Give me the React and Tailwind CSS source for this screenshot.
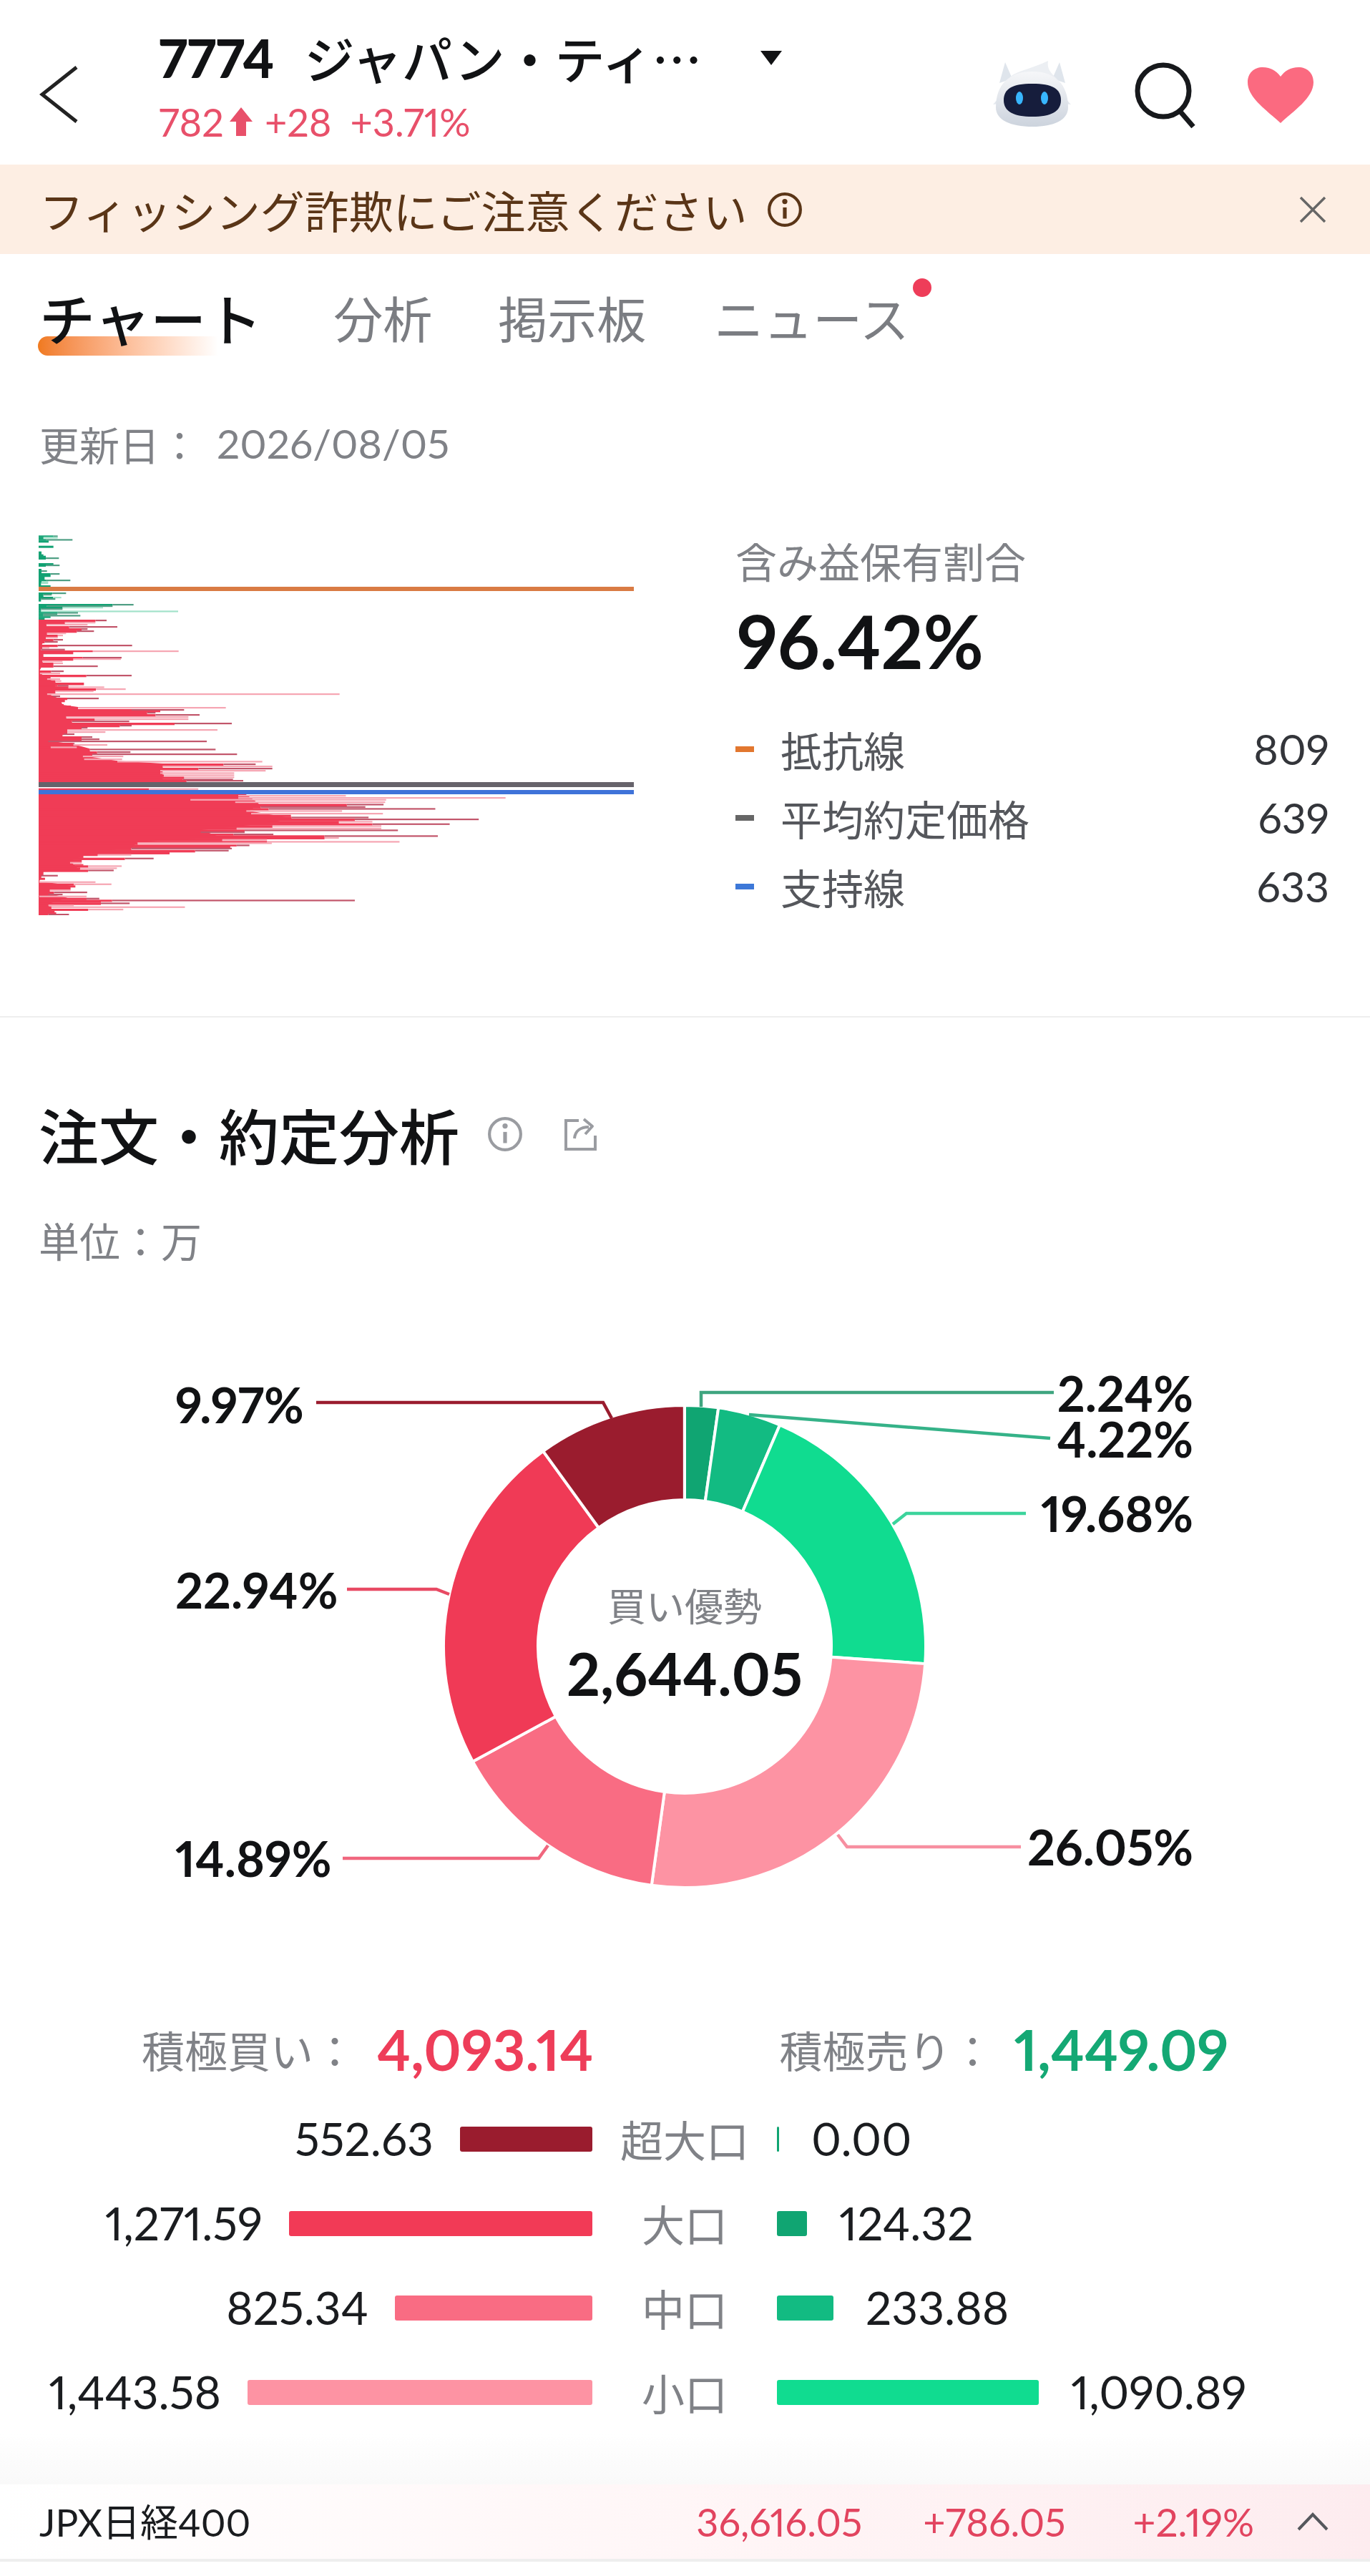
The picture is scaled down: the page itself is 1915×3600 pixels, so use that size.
import React from 'react';

// depth chart rows, read off the crops: [crop y, solid end, tail end, tail type]
const greenTop = [
  [25,72,90,'d'],[31,30,90,'l'],[40,40,152,'d'],[46,52,52,'d'],[68,72,72,'d'],[92,22,22,'d'],[104,30,30,'d'],[110,40,40,'d'],[117,40,95,'d'],
  [141,72,72,'d'],[147,40,98,'d'],[165,22,22,'d'],[171,22,45,'d'],[183,60,98,'d'],[189,60,60,'d'],[198,35,35,'l'],[210,40,143,'d'],[216,22,50,'l'],[222,20,50,'l'],[234,60,60,'d'],
  [264,68,125,'d'],[270,30,65,'d'],[282,70,105,'l'],[288,20,80,'d'],[293,20,20,'d'],
  [312,320,408,'d'],[318,45,320,'d'],[324,110,280,'l'],[330,20,110,'d'],[340,20,595,'l'],[346,90,175,'d'],[352,30,88,'d'],[358,30,185,'d'],[364,60,60,'d'],[370,35,35,'d'],
];
const redTop = [
  [378,248,295,'d'],[387,120,248,'l'],[396,42,215,'l'],[405,138,340,'d'],[414,190,215,'d'],[423,170,242,'d'],[432,45,125,'l'],[441,90,112,'l'],[450,40,90,'l'],[459,72,112,'d'],[468,35,90,'d'],
  [483,90,402,'d'],[492,25,55,'l'],[500,20,120,'d'],[507,237,597,'l'],[513,155,155,'d'],[522,30,30,'d'],[534,195,358,'d'],
];
const redMid = [
  [0,155,355,'l'],[9,25,110,'l'],[18,72,112,'l'],[30,72,258,'d'],[51,62,115,'d'],[60,15,100,'l'],[69,210,400,'d'],[78,60,60,'d'],[84,45,100,'l'],[92,80,105,'l'],[102,200,200,'d'],[112,90,135,'d'],[118,135,285,'l'],[126,250,375,'l'],[135,80,240,'l'],
  [147,45,1272,'l'],[156,70,100,'d'],[165,130,262,'d'],[174,120,120,'d'],[183,100,100,'d'],[192,115,115,'d'],[198,145,145,'d'],[204,175,795,'l'],[213,400,620,'d'],[219,520,520,'d'],[225,465,500,'d'],[234,500,685,'d'],
  [243,125,638,'l'],[252,245,638,'l'],[261,150,390,'d'],[270,580,820,'d'],[279,350,400,'d'],[288,190,215,'d'],[297,130,760,'l'],[306,130,290,'l'],[315,115,160,'d'],[321,110,110,'d'],[327,190,235,'d'],[336,190,265,'d'],
  [345,50,715,'d'],[354,155,160,'d'],[360,155,298,'l'],[370,60,170,'l'],[379,225,752,'d'],[390,255,395,'d'],[399,235,842,'d'],[408,195,365,'l'],[420,200,360,'l'],[430,340,948,'l'],[441,785,920,'d'],[450,530,990,'l'],
  [459,680,990,'d'],[468,520,962,'l'],[478,520,830,'l'],[487,535,830,'l'],[496,620,830,'l'],[505,615,825,'d'],[510,630,868,'d'],[516,630,630,'d'],
];
const redLow = [
  [5,355,510,'l'],[33,635,972,'l'],[42,635,1472,'l'],[50,485,1098,'l'],[60,625,1095,'l'],[70,975,1090,'d'],[80,705,1033,'d'],[88,730,1252,'d'],[97,660,960,'l'],[108,675,1088,'l'],[116,800,800,'d'],[124,802,1043,'d'],
  [132,1000,1388,'d'],[142,950,1055,'l'],[152,1055,1297,'d'],[160,742,1083,'l'],[170,630,1083,'l'],[178,655,1135,'d'],[186,517,655,'d'],[195,620,745,'d'],[202,905,1260,'d'],[210,905,950,'l'],[218,585,725,'l'],[226,725,1140,'l'],
  [232,320,740,'l'],[241,630,670,'d'],[248,610,610,'d'],[254,300,615,'d'],[263,500,605,'d'],[273,420,420,'d'],[281,195,300,'l'],[288,150,150,'d'],[296,280,370,'d'],[305,145,145,'d'],[314,108,145,'l'],[323,150,150,'d'],[328,165,270,'l'],[337,140,255,'l'],[346,165,245,'d'],
  [355,25,25,'d'],[368,18,70,'d'],[380,30,30,'l'],[395,12,188,'l'],[404,120,238,'l'],[412,125,125,'d'],[420,110,110,'d'],[429,45,110,'l'],[438,58,162,'d'],[447,40,85,'d'],[455,10,160,'l'],[464,160,200,'d'],[472,240,1000,'d'],[480,205,205,'d'],[484,205,295,'d'],[493,40,120,'l'],[500,50,468,'l'],[510,165,275,'l'],[518,60,60,'d'],[525,65,65,'d'],[531,40,105,'d'],[537,25,25,'d'],
];

// solid red mass underneath the rows, as [crop y, crop x] outlines
const topMass = [[378,120],[396,42],[420,45],[470,30],[500,15],[540,30]];
const midMass = [[0,30],[30,25],[50,15],[60,15],[84,45],[100,80],[135,80],[147,45],[170,100],[195,110],[204,175],[243,125],[300,130],[315,115],[345,50],[360,155],[379,225],[408,195],[430,340],[441,530],[516,530]];
const lowMass = [[12,640],[70,700],[100,670],[130,800],[150,740],[180,520],[210,580],[230,320],[255,300],[270,190],[290,145],[310,108],[350,140],[355,25],[395,12],[412,110],[425,40],[445,40],[464,100],[490,40],[525,50],[537,15]];

const massPoints = (outline, topY, scale) => {
  const pts = outline.map(([zy, zx]) => `${54 + (zx - 10) / scale},${topY + zy / 3}`);
  return `54,${topY + outline[0][0] / 3} ${pts.join(' ')} 54,${topY + outline[outline.length - 1][0] / 3}`;
};

const green = { solid: '#12a273', d: '#4f9f84', l: '#a2e2ca' };
const red = { solid: '#f03c56', d: '#c2566b', l: '#f6a6b3' };

const toRows = (rows, topY, scale, pal) =>
  rows.map(([zy, s, e, t]) => ({ y: topY + zy / 3, s: (s - 10) / scale, e: (e - 10) / scale, tail: pal[t], solid: pal.solid }));

const depthRows = [
  ...toRows(greenTop, 740, 3, green),
  ...toRows(redTop, 740, 3, red),
  ...toRows(redMid, 920, 3, red),
  ...toRows(redLow, 1100, 2.24, red),
];

const DepthChart = () => (
  <svg className="w-[832px] h-[532px] shrink-0 block" viewBox="54 747 832 532">
    <polygon points={massPoints(topMass, 740, 3)} fill="#f03c56" />
    <polygon points={massPoints(midMass, 920, 3)} fill="#f03c56" />
    <polygon points={massPoints(lowMass, 1100, 2.24)} fill="#f03c56" />
    {depthRows.map((r, i) => {
      const next = depthRows[i + 1];
      const gap = next ? next.y - r.y : 3;
      const h = gap > 0 && gap < 4.5 ? gap + 0.3 : 3;
      return (
        <g key={i}>
          {r.e > r.s && <rect x={54 + r.s} y={r.y} width={r.e - r.s} height={2.2} fill={r.tail} />}
          <rect x={54} y={r.y} width={Math.max(r.s, 1)} height={h} fill={r.solid} />
        </g>
      );
    })}
    <rect x="54" y="820" width="832" height="6" fill="#d97b44" />
    <rect x="54" y="1093" width="832" height="7" fill="#66636b" />
    <rect x="54" y="1104" width="832" height="6" fill="#3f73d9" />
  </svg>
);

// donut segments clockwise from twelve o'clock
const segments = [
  [2.24, '#10a572'],
  [4.22, '#12bb82'],
  [19.68, '#10dc90'],
  [26.05, '#fd93a3'],
  [14.89, '#f96c83'],
  [22.94, '#f03a56'],
  [9.97, '#9a1c2e'],
];

const wedge = (from, to) => {
  const cx = 957, cy = 2301, R = 337, r = 205;
  const pt = (rad, pct) => {
    const a = (pct / 100) * Math.PI * 2 - Math.PI / 2;
    return `${(cx + rad * Math.cos(a)).toFixed(2)} ${(cy + rad * Math.sin(a)).toFixed(2)}`;
  };
  const large = to - from > 50 ? 1 : 0;
  return `M${pt(R, from)} A${R} ${R} 0 ${large} 1 ${pt(R, to)} L${pt(r, to)} A${r} ${r} 0 ${large} 0 ${pt(r, from)} Z`;
};

const DonutDrawing = () => {
  let acc = 0;
  return (
    <svg className="absolute left-0 top-0 w-[1915px] h-[1058px]" viewBox="0 1762 1915 1058" fill="none">
      {segments.map(([pct, color]) => {
        const from = acc;
        acc += pct;
        return <path key={color} d={wedge(from, acc)} fill={color} stroke="#ffffff" strokeWidth="4" />;
      })}
      <g strokeWidth="4.5">
        <path d="M980 1966V1946H1473" stroke="#3fa57f" />
        <path d="M1047 1977L1468 2010" stroke="#35b288" />
        <path d="M1248 2130L1267 2115H1434" stroke="#3cd49c" />
        <path d="M1171 2564L1184 2581H1427" stroke="#f78fa0" />
        <path d="M766 2579L753 2597H479" stroke="#f0677e" />
        <path d="M628 2228L610 2221H485" stroke="#e84a63" />
        <path d="M855 1982L843 1960H442" stroke="#9a1c2e" />
      </g>
    </svg>
  );
};

const RobotIcon = () => (
  <svg className="w-[110px] h-[100px]" viewBox="1389 82 110 100">
    <defs>
      <linearGradient id="robotHead" x1="0" y1="0" x2="0" y2="1">
        <stop offset="0" stopColor="#f6f7f9" />
        <stop offset="1" stopColor="#ccd3dd" />
      </linearGradient>
    </defs>
    <path d="M1398 116L1406 87L1416 110Z M1490 116L1482 87L1472 110Z" fill="#dfe5ec" />
    <path d="M1412 108C1424 98 1444 96 1466 85C1464 96 1470 102 1478 110Z" fill="#eceff3" />
    <path d="M1389 146C1394 141 1397 137 1399 128L1405 144Z M1498 146C1493 141 1490 137 1488 128L1482 144Z" fill="#e3e8ee" />
    <path d="M1393 150C1393 118 1412 100 1444 100C1476 100 1494 118 1494 150C1494 168 1474 177 1444 177C1414 177 1393 168 1393 150Z" fill="url(#robotHead)" />
    <path d="M1404 140C1404 124 1416 117 1444 117C1472 117 1484 124 1484 140C1484 156 1470 163 1444 163C1418 163 1404 156 1404 140Z" fill="#161d3c" />
    <ellipse cx="1426" cy="137" rx="5" ry="9" fill="#38b6ff" />
    <ellipse cx="1461" cy="137" rx="5" ry="9" fill="#38b6ff" />
  </svg>
);

const SearchIcon = () => (
  <svg className="w-[90px] h-[100px]" viewBox="1582 82 90 100" fill="none" stroke="#17191c" strokeWidth="7">
    <circle cx="1626" cy="127" r="36" />
    <path d="M1649 155L1668 177" />
  </svg>
);

const HeartIcon = () => (
  <svg className="w-[92px] h-[100px]" viewBox="1744 82 92 100">
    <path d="M1790 172C1772 155 1744 137 1744 115C1744 102 1753 94 1765 94C1776 94 1784 99 1790 107C1796 99 1804 94 1815 94C1827 94 1836 102 1836 115C1836 137 1808 155 1790 172Z" fill="#fb6a80" />
  </svg>
);

const InfoIcon = ({ className, color }) => (
  <svg className={className} viewBox="0 0 48 48" fill="none" stroke={color} strokeWidth="4">
    <circle cx="24" cy="24" r="21" />
    <path d="M24 21V36" strokeWidth="5" />
    <circle cx="24" cy="13" r="1.5" fill={color} />
  </svg>
);

const pctLabels = [
  { text: '2.24%', cls: 'right-[247px] top-[153px]' },
  { text: '4.22%', cls: 'right-[247px] top-[217px]' },
  { text: '19.68%', cls: 'right-[247px] top-[321px]' },
  { text: '26.05%', cls: 'right-[247px] top-[787px]' },
  { text: '9.97%', cls: 'left-[245px] top-[169px]' },
  { text: '22.94%', cls: 'left-[245px] top-[428px]' },
  { text: '14.89%', cls: 'left-[245px] top-[803px]' },
];

const sizeRows = [
  { label: '超大口', left: '552.63', right: '0.00', lw: 'w-[185px]', lc: 'bg-[#9a1c2e]', rw: 'w-[3px]', rc: 'bg-[#10a572]' },
  { label: '大口', left: '1,271.59', right: '124.32', lw: 'w-[424px]', lc: 'bg-[#f23a56]', rw: 'w-[42px]', rc: 'bg-[#10a572]' },
  { label: '中口', left: '825.34', right: '233.88', lw: 'w-[276px]', lc: 'bg-[#f96c83]', rw: 'w-[79px]', rc: 'bg-[#12bb82]' },
  { label: '小口', left: '1,443.58', right: '1,090.89', lw: 'w-[482px]', lc: 'bg-[#fd93a3]', rw: 'w-[366px]', rc: 'bg-[#10dc90]' },
];

const legendRows = [
  { label: '抵抗線', value: '809', color: 'bg-[#e2772f]' },
  { label: '平均約定価格', value: '639', color: 'bg-[#666666]' },
  { label: '支持線', value: '633', color: 'bg-[#3d78d8]' },
];

export default function App() {
  return (
    <div className="w-[1915px] h-[3600px] overflow-hidden bg-white text-[#111214] proportional-nums font-['Lato','Noto_Sans_CJK_JP',sans-serif]">
      {/* header */}
      <div className="flex h-[230px] pl-[55px] pr-[79px]">
        <svg className="w-[56px] h-[90px] mt-[88px] shrink-0" viewBox="55 88 56 90" fill="none" stroke="#222222" strokeWidth="5">
          <path d="M107 94L59 132L107 170" />
        </svg>
        <div className="ml-[111px] pt-[43px]">
          <div className="flex items-center h-[76px] leading-[76px]">
            <span className="text-[74px] font-black">7774</span>
            <span className="ml-[42px] text-[70px] font-medium font-['Noto_Sans_CJK_JP',sans-serif]">ジャパン・ティ…</span>
            <span className="ml-[82px] w-0 h-0 border-x-[15px] border-x-transparent border-t-[20px] border-t-[#111214]" />
          </div>
          <div className="flex items-center h-[60px] mt-[21px] text-[54px] text-[#e8506a]">
            <span>782</span>
            <svg className="w-[36px] h-[44px] ml-[6px]" viewBox="0 0 36 44" fill="#e8506a">
              <path d="M18 2L34 22H25V42H11V22H2Z" />
            </svg>
            <span className="ml-[15px]">+28</span>
            <span className="ml-[26px]">+3.71%</span>
          </div>
        </div>
        <div className="ml-auto mt-[82px] h-[100px] flex">
          <RobotIcon />
          <div className="ml-[84px]"><SearchIcon /></div>
          <div className="ml-[72px]"><HeartIcon /></div>
        </div>
      </div>

      {/* notice banner */}
      <div className="flex items-center h-[125px] pl-[55px] pr-[60px] bg-[#fdeee3] text-[#5a3517]">
        <span className="text-[62px] leading-none font-['Noto_Sans_CJK_JP',sans-serif]">フィッシング詐欺にご注意ください</span>
        <InfoIcon className="w-[50px] h-[50px] ml-[27px]" color="#5a3517" />
        <svg className="w-[40px] h-[40px] ml-auto" viewBox="0 0 40 40" fill="none" stroke="#666666" strokeWidth="3.5">
          <path d="M3 3L37 37M37 3L3 37" />
        </svg>
      </div>

      {/* tabs */}
      <div className="flex items-center h-[90px] mt-[43px] pl-[55px] text-[69px] leading-[90px] text-[#7b7d82] font-['Noto_Sans_CJK_JP',sans-serif]">
        <div className="relative text-[78px] font-medium text-[#111214]">
          <span className="absolute left-[-2px] top-[72px] w-[252px] h-[27px] rounded-tl-[14px] rounded-bl-[14px] bg-linear-to-r from-[#f07a1e] to-white" />
          <span className="relative">チャート</span>
        </div>
        <span className="ml-[100px]">分析</span>
        <span className="ml-[92px]">掲示板</span>
        <div className="relative ml-[95px]">
          <span>ニュース</span>
          <span className="absolute right-[-31px] top-[-9px] w-[26px] h-[26px] rounded-full bg-[#ee3d59]" />
        </div>
      </div>

      {/* update date */}
      <div className="flex items-center h-[60px] mt-[102px] pl-[55px] text-[57px] text-[#808287]">
        <span className="font-['Noto_Sans_CJK_JP',sans-serif] text-[56px]">更新日：</span>
        <span className="ml-[24px]">2026/08/05</span>
      </div>

      {/* cost distribution */}
      <div className="flex mt-[97px] pl-[54px]">
        <DepthChart />
        <div className="w-[830px] ml-[142px] pt-[4px]">
          <div className="h-[64px] leading-[64px] text-[58px] text-[#808287] font-['Noto_Sans_CJK_JP',sans-serif]">含み益保有割合</div>
          <div className="h-[120px] leading-[120px] mt-[20px] ml-[2px] text-[103px] font-bold">96.42%</div>
          <div className="flex flex-col gap-[32px] mt-[60px]">
            {legendRows.map((row) => (
              <div key={row.label} className="flex items-center h-[64px] text-[#55575c]">
                <span className={`w-[26px] h-[8px] ${row.color}`} />
                <span className="ml-[37px] text-[58px] font-['Noto_Sans_CJK_JP',sans-serif]">{row.label}</span>
                <span className="ml-auto text-[59px] text-[#33353a]">{row.value}</span>
              </div>
            ))}
          </div>
        </div>
      </div>

      <div className="h-[2px] mt-[141px] bg-[#eeeeee]" />

      {/* order analysis heading */}
      <div className="flex items-center h-[84px] mt-[121px] pl-[54px]">
        <span className="text-[84px] leading-[84px] font-medium font-['Noto_Sans_CJK_JP',sans-serif]">注文・約定分析</span>
        <InfoIcon className="w-[50px] h-[50px] ml-[39px]" color="#9a9ca1" />
        <svg className="w-[48px] h-[48px] ml-[57px]" viewBox="0 0 48 48" fill="none" stroke="#9a9ca1" strokeWidth="4">
          <path d="M21 5H3V45H44V26" />
          <path d="M15 30C16 19 24 14 35 14M28 3L40 13L30 24" strokeLinejoin="round" />
        </svg>
      </div>
      <div className="h-[60px] leading-[60px] mt-[75px] pl-[54px] text-[57px] text-[#808287] font-['Noto_Sans_CJK_JP',sans-serif]">単位：万</div>

      {/* donut */}
      <div className="relative h-[1058px]">
        <DonutDrawing />
        {pctLabels.map((l) => (
          <span key={l.text} className={`absolute h-[64px] leading-[64px] text-[68px] font-bold ${l.cls}`}>{l.text}</span>
        ))}
        <div className="absolute left-[752px] top-[441px] w-[410px] flex flex-col items-center">
          <span className="h-[80px] leading-[80px] text-[54px] text-[#808287] font-['Noto_Sans_CJK_JP',sans-serif]">買い優勢</span>
          <span className="h-[80px] leading-[80px] mt-[15px] text-[82px] font-bold">2,644.05</span>
        </div>
      </div>

      {/* totals */}
      <div className="flex items-center h-[88px] pl-[198px]">
        <span className="text-[60px] text-[#808287] font-['Noto_Sans_CJK_JP',sans-serif]">積極買い：</span>
        <span className="ml-[29px] text-[79px] font-bold text-[#ee3d59]">4,093.14</span>
        <span className="ml-[260px] text-[60px] text-[#808287] font-['Noto_Sans_CJK_JP',sans-serif]">積極売り：</span>
        <span className="ml-[28px] text-[79px] font-bold text-[#14a874]">1,449.09</span>
      </div>

      {/* size breakdown */}
      <div className="mt-[22px]">
        {sizeRows.map((row) => (
          <div key={row.label} className="flex items-center h-[118px] text-[64px] text-[#1a1c1f]">
            <div className="flex items-center justify-end w-[828px]">
              <span>{row.left}</span>
              <span className={`ml-[37px] h-[35px] rounded-[3px] ${row.lw} ${row.lc}`} />
            </div>
            <span className="w-[258px] text-center text-[60px] text-[#808287] font-['Noto_Sans_CJK_JP',sans-serif]">{row.label}</span>
            <div className="flex items-center">
              <span className={`h-[35px] rounded-[3px] ${row.rw} ${row.rc}`} />
              <span className="ml-[45px]">{row.right}</span>
            </div>
          </div>
        ))}
      </div>

      <div className="h-[70px] bg-linear-to-b from-white to-[#f9f9f9]" />

      {/* index ticker */}
      <div className="flex items-center h-[104px] pl-[55px] pr-[58px] bg-linear-to-r from-white via-[#fff6f7] to-[#fdecef] border-b-[4px] border-[#eeeeee] box-content">
        <span className="text-[53px] text-[#1a1c1f]">JPX<span className="font-['Noto_Sans_CJK_JP',sans-serif]">日経</span>400</span>
        <span className="ml-auto text-[54px] text-[#e2445f]">36,616.05</span>
        <span className="ml-[85px] text-[54px] text-[#e2445f]">+786.05</span>
        <span className="ml-[94px] text-[55px] text-[#e2445f]">+2.19%</span>
        <svg className="w-[44px] h-[26px] ml-[60px]" viewBox="0 0 44 26" fill="none" stroke="#55575c" strokeWidth="4">
          <path d="M2 24L22 3L42 24" />
        </svg>
      </div>
    </div>
  );
}
